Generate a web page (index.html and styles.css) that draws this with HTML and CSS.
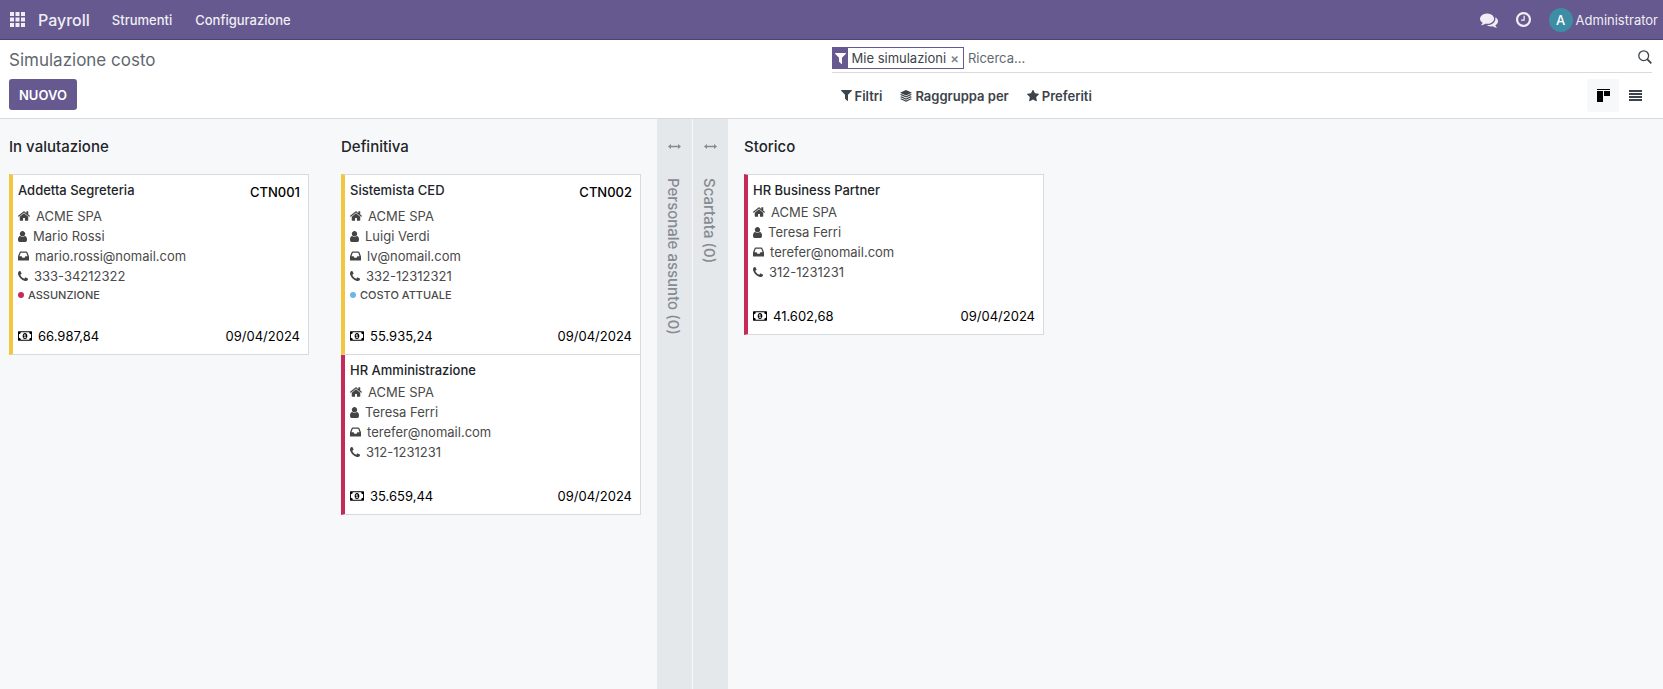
FILE: index.html
```html
<!DOCTYPE html>
<html lang="it">
<head>
    <meta charset="UTF-8">
    <meta name="viewport" content="width=device-width, initial-scale=1.0">
    <title>Simulazione costo</title>
    <link rel="stylesheet" href="styles.css">
</head>
<body>

    <!-- Icons -->
    <svg class="sprite" aria-hidden="true">
        <symbol id="i-apps" viewBox="0 0 15 15"><path d="M0 0h4v4H0zM5.5 0h4v4h-4zM11 0h4v4h-4zM0 5.5h4v4H0zM5.5 5.5h4v4h-4zM11 5.5h4v4h-4zM0 11h4v4H0zM5.5 11h4v4h-4zM11 11h4v4h-4z"/></symbol>
        <symbol id="i-comments" viewBox="0 0 1792 1792"><path d="M1408 768q0 139-94 257t-256.500 186.500-353.500 68.500q-86 0-176-16-124 88-278 128-36 9-86 16h-3q-11 0-20.500-8t-11.500-21q-1-3-1-6.500t.5-6.500 2-6l2.500-5 3.500-5.500 4-5 4.500-5 4-4.500q5-6 23-25t26-29.500 22.500-29 25-38.500 20.500-44q-124-72-195-177t-71-224q0-139 94-257t256.500-186.500 353.500-68.500 353.500 68.500 256.500 186.500 94 257zm384 256q0 120-71 224.500t-195 176.500q10 24 20.500 44t25 38.500 22.500 29 26 29.500 23 25q1 1 4 4.500t4.500 5 4 5 3.500 5.500l2.500 5 2 6 .5 6.500-1 6.500q-3 14-13 22t-22 7q-50-7-86-16-154-40-278-128-90 16-176 16-271 0-472-132 58 4 88 4 161 0 309-45t264-129q125-92 192-212t67-254q0-77-23-152 129 71 204 178t75 230z"/></symbol>
        <symbol id="i-clock" viewBox="128 128 1536 1536"><path d="M1024 544v448q0 14-9 23t-23 9h-320q-14 0-23-9t-9-23v-64q0-14 9-23t23-9h224v-352q0-14 9-23t23-9h64q14 0 23 9t9 23zm416 352q0-148-73-273t-198-198-273-73-273 73-198 198-73 273 73 273 198 198 273 73 273-73 198-198 73-273zm224 0q0 209-103 385.500t-279.500 279.500-385.500 103-385.500-103-279.500-279.500-103-385.500 103-385.500 279.500-279.500 385.500-103 385.500 103 279.500 279.500 103 385.500z"/></symbol>
        <symbol id="i-filter" viewBox="192 256 1408 1408"><path d="M1595 295q17 41-14 70l-493 493v742q0 42-39 59-13 5-25 5-27 0-45-19l-256-256q-19-19-19-45v-486l-493-493q-31-29-14-70 17-39 59-39h1280q42 0 59 39z"/></symbol>
        <symbol id="i-star" viewBox="64 64 1664 1664"><path d="M1728 647q0 22-26 48l-363 354 86 500q1 7 1 20 0 21-10.500 35.500t-30.500 14.500q-19 0-40-12l-449-236-449 236q-22 12-40 12-21 0-31.500-14.500t-10.500-35.500q0-6 2-20l86-500-364-354q-25-27-25-48 0-37 56-46l502-73 225-455q19-41 49-41t49 41l225 455 502 73q56 9 56 46z"/></symbol>
        <symbol id="i-layers" viewBox="0 0 24 24"><path d="M12 0 24 5.500 12 11 0 5.500z"/><path d="M0 9.500 3 8.200 12 12.500 21 8.200l3 1.300L12 15zM0 13.800l3-1.300 9 4.300 9-4.300 3 1.300-12 5.500zM0 18.100l3-1.300 9 4.300 9-4.300 3 1.300-12 5.500z"/></symbol>
        <symbol id="i-search" viewBox="0 0 14 14"><circle cx="5.700" cy="5.700" r="4.900" fill="none" stroke="currentColor" stroke-width="1.300"/><path d="M9.200 9.200 13.300 13.300" fill="none" stroke="currentColor" stroke-width="1.800"/></symbol>
        <symbol id="i-kanban" viewBox="0 0 13 13"><path d="M0 0h13v1H0zM0 2h6v11H0zM7 2h6v5H7z"/></symbol>
        <symbol id="i-list" viewBox="0 0 13 13"><path d="M0 1h13v2H0zM0 4h13v2H0zM0 7h13v2H0zM0 10h13v2H0z"/></symbol>
        <symbol id="i-home" viewBox="80 256 1632 1280"><path d="M1472 992v480q0 26-19 45t-45 19h-384v-384h-256v384h-384q-26 0-45-19t-19-45v-480q0-1 .5-3t.5-3l575-474 575 474q1 2 1 6zm223-69l-62 74q-8 9-21 11h-3q-13 0-21-7l-692-577-692 577q-12 8-24 7-13-2-21-11l-62-74q-8-10-7-23.500t11-21.500l719-599q32-26 76-26t76 26l244 204v-195q0-14 9-23t23-9h192q14 0 23 9t9 23v408l219 182q10 8 11 21.500t-7 23.500z"/></symbol>
        <symbol id="i-user" viewBox="256 128 1280 1536"><path d="M1536 1399q0 109-62.500 187t-150.500 78h-854q-88 0-150.500-78t-62.500-187q0-85 8.500-160.500t31.500-152 58.500-131 94-89 134.500-34.500q131 128 313 128t313-128q76 0 134.500 34.500t94 89 58.500 131 31.500 152 8.500 160.500zm-256-887q0 159-112.500 271.500t-271.500 112.500-271.500-112.500-112.500-271.500 112.500-271.500 271.500-112.500 271.500 112.500 112.500 271.500z"/></symbol>
        <symbol id="i-inbox" viewBox="0 0 24 20"><path fill-rule="evenodd" d="M5.500 0h13q1.200 0 1.700 1.100L23.500 9.500q.5 1.200.5 2.500v6.500q0 1.500-1.500 1.500h-21Q0 20 0 18.500V12q0-1.300.5-2.500L3.800 1.100Q4.300 0 5.500 0zM6 3 3.200 10.500H8l1.500 3.200h5l1.500-3.200h4.800L18 3z"/></symbol>
        <symbol id="i-phone" viewBox="192 128 1408 1408"><path d="M1600 1240q0 27-10 70.500t-21 68.500q-21 50-122 106-94 51-186 51-27 0-52.500-3.500t-57.500-12.500-47.500-14.500-55.500-20.500-49-18q-98-35-175-83-128-79-264.500-215.500t-215.500-264.500q-48-77-83-175-3-9-18-49t-20.500-55.500-14.500-47.500-12.500-57.500-3.500-52.500q0-92 51-186 56-101 106-122 25-11 68.500-21t70.500-10q14 0 21 3 18 6 53 76 11 19 30 54t35 63.500 31 53.500q3 4 17.500 25t21.500 35.500 7 28.500q0 20-28.500 50t-62 55-62 53-28.500 46q0 9 5 22.500t8.500 20.500 14 24 11.500 19q76 137 174 235t235 174q2 1 19 11.500t24 14 20.500 8.500 22.500 5q18 0 46-28.500t53-62 55-62 50-28.500q14 0 28.500 7t35.500 21.500 25 17.500q25 15 53.500 31t63.500 35 54 30q70 35 76 53 3 7 3 21z"/></symbol>
        <symbol id="i-money" viewBox="0 0 30 20"><path fill-rule="evenodd" d="M1 0h28q1 0 1 1v18q0 1-1 1H1q-1 0-1-1V1q0-1 1-1zM6 2q0 4-4 4v8q4 0 4 4h18q0-4 4-4V6q-4 0-4-4z"/><path fill-rule="evenodd" d="M15 3.500c3.200 0 5 3 5 6.500s-1.800 6.500-5 6.500-5-3-5-6.500 1.800-6.500 5-6.500zM14.200 6l-2.400 2.200 1.100 1.200 1.200-1v4H12.300V14h5.400v-1.600H16V6z"/></symbol>
        <symbol id="i-arrows" viewBox="0 0 26 10"><path d="M0 5l6-5v3.500h14V0l6 5-6 5V6.500H6V10z"/></symbol>
    </svg>

    <header class="navbar">
        <button class="nav-btn apps" aria-label="Applicazioni"><svg><use href="#i-apps"/></svg></button>
        <a class="brand" href="#">Payroll</a>
        <nav class="menu">
            <a href="#">Strumenti</a>
            <a href="#">Configurazione</a>
        </nav>
        <div class="systray">
            <button class="nav-btn" aria-label="Messaggi"><svg class="ic-comments"><use href="#i-comments"/></svg></button>
            <button class="nav-btn" aria-label="Attività"><svg><use href="#i-clock"/></svg></button>
            <button class="nav-btn user"><span class="avatar">A</span>Administrator</button>
        </div>
    </header>

    <div class="control-panel">
        <div class="cp-left">
            <h1>Simulazione costo</h1>
            <button class="btn-primary">NUOVO</button>
        </div>
        <div class="cp-right">
            <div class="search">
                <div class="facet">
                    <span class="facet-icon"><svg><use href="#i-filter"/></svg></span>
                    <span class="facet-text">Mie simulazioni</span>
                    <button class="facet-remove" aria-label="Rimuovi">×</button>
                </div>
                <input type="text" placeholder="Ricerca..." aria-label="Ricerca">
                <button class="search-btn" aria-label="Cerca"><svg><use href="#i-search"/></svg></button>
            </div>
            <div class="options">
                <button class="option"><svg><use href="#i-filter"/></svg>Filtri</button>
                <button class="option"><svg class="ic-layers"><use href="#i-layers"/></svg>Raggruppa per</button>
                <button class="option"><svg class="ic-star"><use href="#i-star"/></svg>Preferiti</button>
                <div class="views">
                    <button class="view active" aria-label="Kanban"><svg><use href="#i-kanban"/></svg></button>
                    <button class="view" aria-label="Lista"><svg><use href="#i-list"/></svg></button>
                </div>
            </div>
        </div>
    </div>

    <main class="board">
        <section class="column">
            <h2>In valutazione</h2>
            <article class="card yellow">
                <div class="card-head coded"><h3>Addetta Segreteria</h3><span class="code">CTN001</span></div>
                <ul class="info">
                    <li><svg class="ic-home"><use href="#i-home"/></svg>ACME SPA</li>
                    <li><svg class="ic-user"><use href="#i-user"/></svg>Mario Rossi</li>
                    <li><svg class="ic-inbox"><use href="#i-inbox"/></svg>mario.rossi@nomail.com</li>
                    <li><svg class="ic-phone"><use href="#i-phone"/></svg>333-34212322</li>
                    <li class="tag"><span class="dot red"></span>ASSUNZIONE</li>
                </ul>
                <div class="card-foot"><span class="amount"><svg><use href="#i-money"/></svg>66.987,84</span><time datetime="2024-04-09">09/04/2024</time></div>
            </article>
        </section>

        <section class="column">
            <h2>Definitiva</h2>
            <article class="card yellow">
                <div class="card-head coded"><h3>Sistemista CED</h3><span class="code">CTN002</span></div>
                <ul class="info">
                    <li><svg class="ic-home"><use href="#i-home"/></svg>ACME SPA</li>
                    <li><svg class="ic-user"><use href="#i-user"/></svg>Luigi Verdi</li>
                    <li><svg class="ic-inbox"><use href="#i-inbox"/></svg>lv@nomail.com</li>
                    <li><svg class="ic-phone"><use href="#i-phone"/></svg>332-12312321</li>
                    <li class="tag"><span class="dot blue"></span>COSTO ATTUALE</li>
                </ul>
                <div class="card-foot"><span class="amount"><svg><use href="#i-money"/></svg>55.935,24</span><time datetime="2024-04-09">09/04/2024</time></div>
            </article>
            <article class="card crimson">
                <div class="card-head"><h3>HR Amministrazione</h3></div>
                <ul class="info">
                    <li><svg class="ic-home"><use href="#i-home"/></svg>ACME SPA</li>
                    <li><svg class="ic-user"><use href="#i-user"/></svg>Teresa Ferri</li>
                    <li><svg class="ic-inbox"><use href="#i-inbox"/></svg>terefer@nomail.com</li>
                    <li><svg class="ic-phone"><use href="#i-phone"/></svg>312-1231231</li>
                </ul>
                <div class="card-foot"><span class="amount"><svg><use href="#i-money"/></svg>35.659,44</span><time datetime="2024-04-09">09/04/2024</time></div>
            </article>
        </section>

        <section class="folded">
            <svg><use href="#i-arrows"/></svg>
            <h2>Personale assunto (0)</h2>
        </section>
        <section class="folded">
            <svg><use href="#i-arrows"/></svg>
            <h2>Scartata (0)</h2>
        </section>

        <section class="column">
            <h2>Storico</h2>
            <article class="card crimson">
                <div class="card-head"><h3>HR Business Partner</h3></div>
                <ul class="info">
                    <li><svg class="ic-home"><use href="#i-home"/></svg>ACME SPA</li>
                    <li><svg class="ic-user"><use href="#i-user"/></svg>Teresa Ferri</li>
                    <li><svg class="ic-inbox"><use href="#i-inbox"/></svg>terefer@nomail.com</li>
                    <li><svg class="ic-phone"><use href="#i-phone"/></svg>312-1231231</li>
                </ul>
                <div class="card-foot"><span class="amount"><svg><use href="#i-money"/></svg>41.602,68</span><time datetime="2024-04-09">09/04/2024</time></div>
            </article>
        </section>
    </main>

</body>
</html>
```
FILE: styles.css
```css
* {
    margin: 0;
    padding: 0;
    box-sizing: border-box;
}

body {
    display: flex;
    flex-direction: column;
    min-height: 100vh;
    font-family: Inter, "Liberation Sans", sans-serif;
    font-size: 13px;
    line-height: 20px;
    color: #212529;
    background-color: #f7f8fa;
}

button, input {
    font: inherit;
    color: inherit;
    background: none;
    border: none;
}

button {
    cursor: pointer;
}

a {
    color: inherit;
    text-decoration: none;
}

svg {
    flex: none;
    fill: currentColor;
}

.sprite {
    display: none;
}

/* Navbar */
.navbar {
    display: flex;
    align-items: center;
    height: 40px;
    padding: 0 5px 0 10px;
    color: #f0eef4;
    background-color: #65598f;
    border-bottom: 1px solid #4d4372;
}

.nav-btn {
    display: flex;
    align-items: center;
}

.nav-btn svg {
    width: 15px;
    height: 15px;
}

.nav-btn .ic-comments {
    width: 18px;
    height: 18px;
}

.brand {
    margin-left: 13px;
    font-size: 16px;
    font-weight: 500;
}

.menu {
    display: flex;
    gap: 23px;
    margin-left: 22px;
    font-weight: 500;
}

.systray {
    display: flex;
    align-items: center;
    gap: 18px;
    margin-left: auto;
}

.avatar {
    width: 24px;
    height: 24px;
    margin-right: 3px;
    font-weight: 500;
    line-height: 24px;
    text-align: center;
    color: #fff;
    background-color: #3f8ca5;
    border-radius: 50%;
}

/* Control panel */
.control-panel {
    display: grid;
    grid-template-columns: 1fr 1fr;
    color: #3c434a;
    background-color: #fff;
    border-bottom: 1px solid #d8dadd;
}

.cp-left {
    padding: 8px 9px;
}

.cp-left h1 {
    margin-bottom: 7px;
    font-size: 17px;
    font-weight: 400;
    line-height: 24px;
    color: #5f686f;
}

.btn-primary {
    height: 31px;
    padding: 0 10px;
    font-weight: 600;
    color: #fff;
    background-color: #65598f;
    border-radius: 3px;
}

.cp-right {
    padding: 7px 11px 0 0;
}

.search {
    display: flex;
    align-items: flex-start;
    height: 26px;
    border-bottom: 1px solid #d8dadd;
}

.facet {
    display: flex;
    height: 22px;
    border: 1px solid #65598f;
}

.facet-icon {
    display: flex;
    align-items: center;
    justify-content: center;
    width: 15px;
    color: #fff;
    background-color: #65598f;
}

.facet-icon svg {
    width: 11px;
    height: 11px;
}

.facet-text {
    padding-left: 4px;
}

.facet-remove {
    padding: 0 4px;
    font-weight: 600;
    color: #7c8389;
}

.search input {
    flex: 1;
    min-width: 0;
    height: 22px;
    padding-left: 4px;
    outline: none;
}

.search input::placeholder {
    color: #5f686f;
}

.search-btn {
    height: 20px;
}

.search-btn svg {
    display: block;
    width: 14px;
    height: 14px;
}

.options {
    display: flex;
    align-items: center;
    gap: 18px;
    padding: 6px 1px 6px 9px;
}

.option {
    display: flex;
    align-items: center;
    gap: 3px;
    font-weight: 600;
}

.option svg {
    width: 11px;
    height: 11px;
}

.option .ic-layers,
.option .ic-star {
    width: 12px;
    height: 12px;
}

.views {
    display: flex;
    margin-left: auto;
}

.view {
    display: flex;
    align-items: center;
    justify-content: center;
    width: 32px;
    height: 33px;
}

.view svg {
    width: 13px;
    height: 13px;
}

.view.active {
    color: #000;
    background-color: #f7f8fa;
    border-radius: 3px 0 0 3px;
}

/* Board */
.board {
    display: flex;
    flex: 1;
}

.column {
    flex: none;
    width: 332px;
    padding: 0 16px;
}

.column:first-child {
    width: 325px;
    padding-left: 9px;
}

.column h2 {
    padding: 18px 0;
    font-size: 15px;
    font-weight: 500;
    line-height: 19px;
}

.card {
    display: flex;
    flex-direction: column;
    padding: 5px 8px 8px 5px;
    background-color: #fff;
    border: 1px solid #d8dadd;
    border-left: 4px solid;
}

.card + .card {
    border-top: none;
}

.card.yellow {
    border-left-color: #f3c642;
}

.card.crimson {
    border-left-color: #c62a58;
}

.card-head {
    display: flex;
    justify-content: space-between;
    height: 22px;
}

.card-head.coded {
    height: 26px;
}

.card-head h3 {
    font-size: 13px;
    font-weight: 500;
}

.code {
    padding-top: 2px;
    font-weight: 500;
    color: #000;
}

.info {
    list-style: none;
    color: #4a4a4a;
}

.info li {
    display: flex;
    align-items: center;
    gap: 6px;
    height: 20px;
}

.info svg {
    color: #444;
}

.ic-home {
    width: 12px;
    height: 10px;
}

.ic-user {
    width: 9px;
    height: 11px;
}

.ic-inbox {
    width: 11px;
    height: 10px;
}

.ic-phone {
    width: 10px;
    height: 10px;
}

.info .tag {
    gap: 4px;
    height: 17px;
    font-size: 11px;
    font-weight: 500;
}

.dot {
    width: 6px;
    height: 6px;
    border-radius: 50%;
}

.dot.red {
    background-color: #c62a58;
}

.dot.blue {
    background-color: #6cb6e8;
}

.card-foot {
    display: flex;
    justify-content: space-between;
    margin-top: 24px;
    color: #000;
}

.card-head.coded ~ .card-foot {
    margin-top: 23px;
}

.amount {
    display: flex;
    align-items: center;
    gap: 6px;
}

.amount svg {
    width: 14px;
    height: 10px;
}

.folded {
    display: flex;
    flex: none;
    flex-direction: column;
    align-items: center;
    width: 35px;
    padding-top: 25px;
    color: #868b90;
    background-color: #e4e8eb;
}

.folded + .folded {
    margin-left: 1px;
}

.folded svg {
    width: 13px;
    height: 5px;
    margin-bottom: 29px;
}

.folded h2 {
    padding-right: 3px;
    writing-mode: vertical-rl;
    font-size: 15px;
    font-weight: 500;
}
```
